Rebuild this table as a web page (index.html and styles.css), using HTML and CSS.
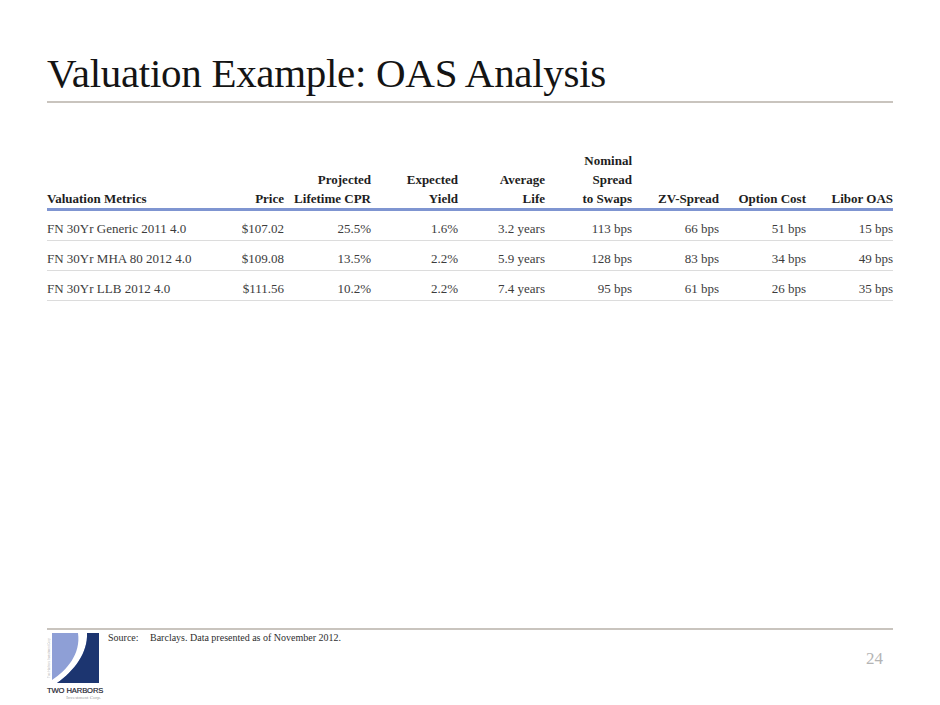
FILE: index.html
```html
<!DOCTYPE html>
<html lang="en">
<head>
<meta charset="utf-8">
<title>Valuation Example: OAS Analysis</title>
<link rel="stylesheet" href="styles.css">
</head>
<body>
<div class="slide">
  <header class="head">
    <h1 class="title">Valuation Example: OAS Analysis</h1>
    <div class="rule"></div>
  </header>

  <table class="data">
    <colgroup>
      <col class="c-first">
      <col class="c-num"><col class="c-num"><col class="c-num"><col class="c-num">
      <col class="c-num"><col class="c-num"><col class="c-num"><col class="c-num">
    </colgroup>
    <thead>
      <tr>
        <th class="left">Valuation Metrics</th>
        <th>Price</th>
        <th>Projected<br>Lifetime CPR</th>
        <th>Expected<br>Yield</th>
        <th>Average<br>Life</th>
        <th>Nominal<br>Spread<br>to Swaps</th>
        <th>ZV-Spread</th>
        <th>Option Cost</th>
        <th>Libor OAS</th>
      </tr>
    </thead>
    <tbody>
      <tr>
        <td class="left">FN 30Yr Generic 2011 4.0</td>
        <td>$107.02</td><td>25.5%</td><td>1.6%</td><td>3.2 years</td>
        <td>113 bps</td><td>66 bps</td><td>51 bps</td><td>15 bps</td>
      </tr>
      <tr>
        <td class="left">FN 30Yr MHA 80 2012 4.0</td>
        <td>$109.08</td><td>13.5%</td><td>2.2%</td><td>5.9 years</td>
        <td>128 bps</td><td>83 bps</td><td>34 bps</td><td>49 bps</td>
      </tr>
      <tr>
        <td class="left">FN 30Yr LLB 2012 4.0</td>
        <td>$111.56</td><td>10.2%</td><td>2.2%</td><td>7.4 years</td>
        <td>95 bps</td><td>61 bps</td><td>26 bps</td><td>35 bps</td>
      </tr>
    </tbody>
  </table>

  <footer class="foot">
    <div class="foot-row">
      <div class="logo">
        <div class="logo-mark">
          <span class="logo-side">Two Harbors Investment Corp</span>
          <svg class="logo-svg" viewBox="0 0 47 50" width="47" height="50" aria-hidden="true">
            <rect x="0" y="0" width="47" height="50" fill="#8e9fd6"/>
            <path d="M26,0 L35,0 C36,20 22,38 5,50 L0,50 L0,47 C15,37 29,21 26,0 Z" fill="#ffffff"/>
            <path d="M35,0 L47,0 L47,50 L5,50 C22,38 36,20 35,0 Z" fill="#1c3570"/>
          </svg>
        </div>
        <div class="logo-name">TWO HARBORS</div>
        <div class="logo-sub">Investment Corp.</div>
      </div>
      <p class="source"><span class="source-label">Source:</span>Barclays. Data presented as of November 2012.</p>
      <div class="page-num">24</div>
    </div>
  </footer>
</div>
</body>
</html>
```

FILE: styles.css
```css
html, body {
  margin: 0;
  padding: 0;
  background: #ffffff;
}

.slide {
  width: 940px;
  height: 705px;
  box-sizing: border-box;
  padding: 0 47px;
  display: flex;
  flex-direction: column;
  font-family: "Liberation Serif", "Times New Roman", serif;
  color: #222222;
}

.head {
  padding-top: 49px;
}

.title {
  margin: 0;
  font-size: 41px;
  line-height: 48px;
  font-weight: normal;
  color: #141414;
  letter-spacing: -0.3px;
}

.rule {
  margin-top: 4px;
  height: 2px;
  background: #c9c4be;
}

.data {
  margin-top: 48px;
  width: 846px;
  table-layout: fixed;
  border-collapse: collapse;
  font-size: 13px;
}

.c-first { width: 150px; }
.c-num { width: 87px; }

.data th {
  font-weight: bold;
  color: #1e1e1e;
  text-align: right;
  vertical-align: bottom;
  line-height: 19px;
  padding: 0;
  border-bottom: 3px solid #7f95d1;
  white-space: nowrap;
}

.data td {
  color: #3c3c3c;
  text-align: right;
  line-height: 20px;
  padding: 8px 0 1px 0;
  border-bottom: 1px solid #dcdcdc;
  white-space: nowrap;
}

.data .left {
  text-align: left;
}

.foot {
  margin-top: auto;
  height: 75px;
  border-top: 2px solid #c9c4be;
}

.foot-row {
  display: flex;
  align-items: flex-start;
}

.logo {
  width: 54px;
  margin-top: 3px;
  display: flex;
  flex-direction: column;
}

.logo-mark {
  display: flex;
  align-items: stretch;
  height: 50px;
}

.logo-side {
  width: 5px;
  writing-mode: vertical-rl;
  transform: rotate(180deg);
  font-family: "Liberation Sans", Arial, sans-serif;
  font-size: 3px;
  line-height: 5px;
  color: #b5b5b5;
  overflow: hidden;
  text-align: center;
}

.logo-svg {
  display: block;
}

.logo-name {
  margin-top: 3px;
  font-family: "Liberation Sans", Arial, sans-serif;
  font-size: 7.6px;
  line-height: 9px;
  color: #23232f;
  text-align: right;
  white-space: nowrap;
  letter-spacing: -0.1px;
  -webkit-text-stroke: 0.2px #23232f;
}

.logo-sub {
  font-family: "Liberation Serif", serif;
  font-size: 5px;
  line-height: 6px;
  color: #a0a0a0;
  text-align: right;
}

.source {
  margin: 0 0 0 7px;
  padding-top: 2px;
  flex: 1;
  font-size: 10px;
  line-height: 12px;
  color: #2e2e2e;
}

.source-label {
  display: inline-block;
  width: 42px;
}

.page-num {
  margin-top: 19px;
  margin-right: 10px;
  font-size: 17px;
  line-height: 20px;
  color: #b4b4b4;
}
```
